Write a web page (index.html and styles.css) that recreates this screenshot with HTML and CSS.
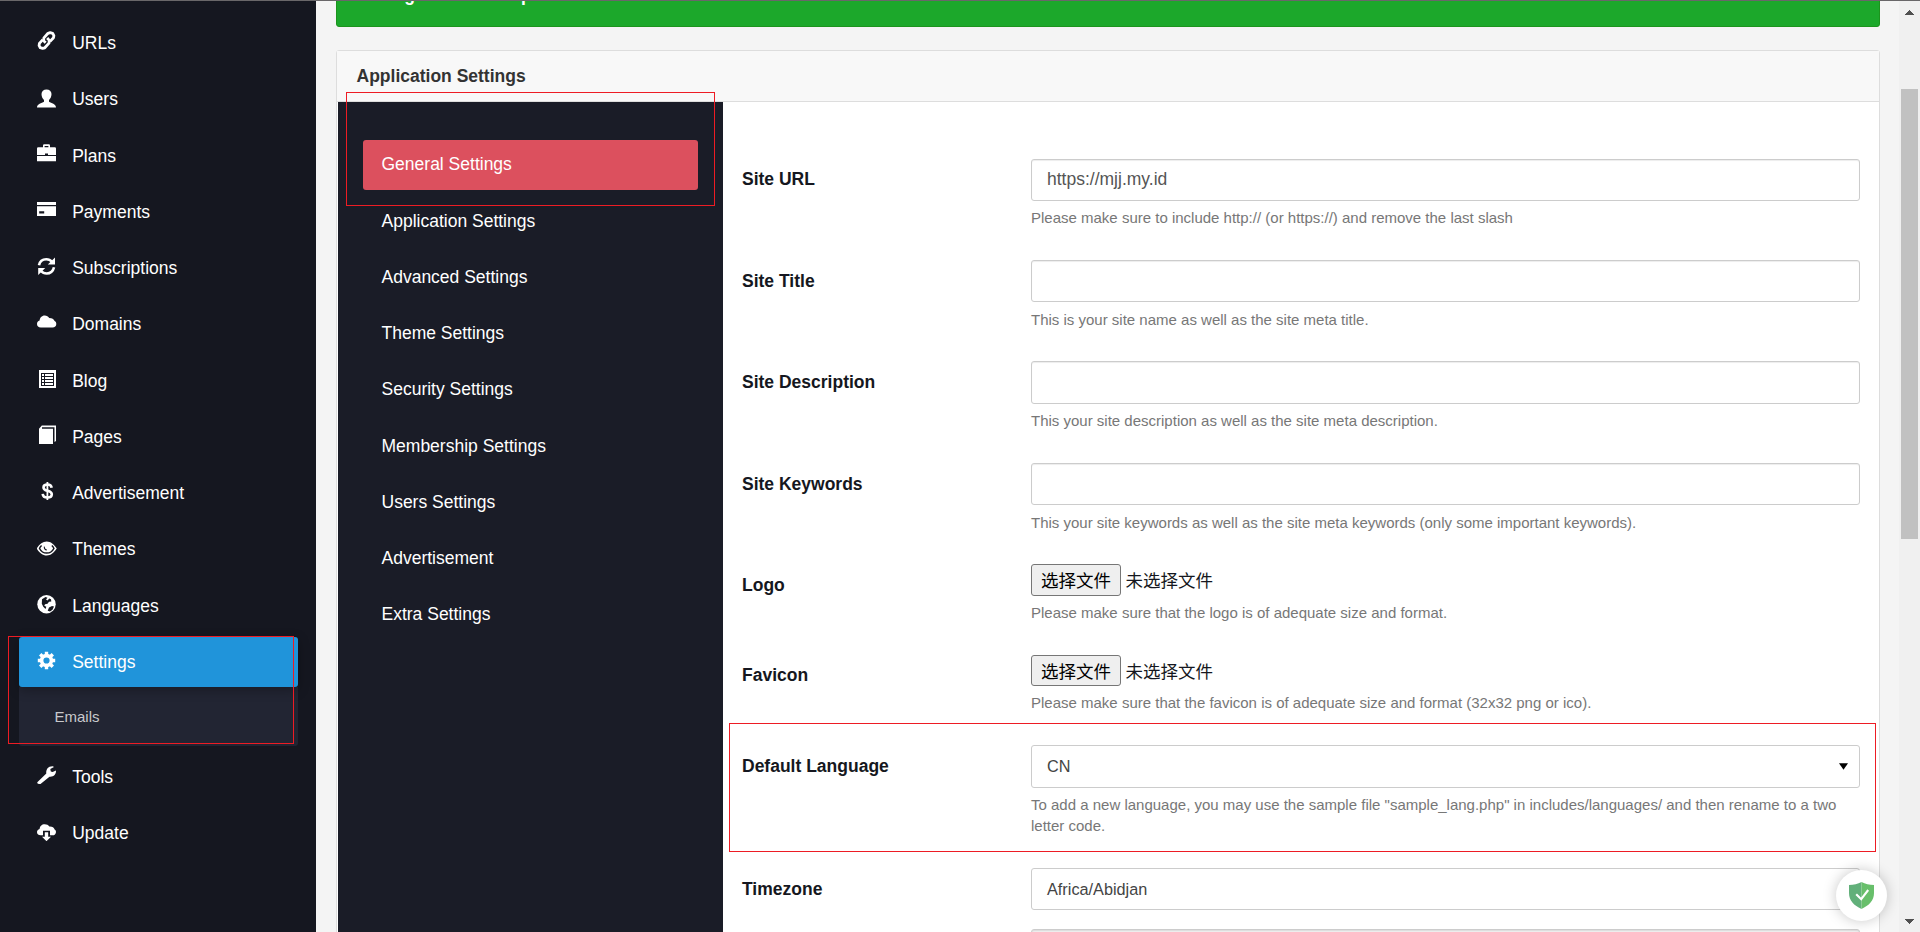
FILE: index.html
```
<!DOCTYPE html>
<html lang="en">
<head>
<meta charset="utf-8">
<title>Application Settings</title>
<link rel="stylesheet" href="styles.css">
</head>
<body>
<div class="app">
  <nav class="sidebar">
    <a class="nav-item"><svg class="icon" viewBox="0 0 20 20"><g fill="none" stroke="#fff" stroke-width="2.800" stroke-linejoin="round"><path d="M8.600 11.800 6.600 9.600 6.900 6.900 11 2.300 13.200 1.600 15.600 2.300 16.900 4.600 16.500 6.700 12.900 10.600"/><path d="M10.200 7 12.300 9.400 12 12.100 7.800 16.800 5.600 17.400 3.300 16.700 2.100 14.600 2.400 12.400 5.800 8.600"/></g></svg>URLs</a>
    <a class="nav-item"><svg class="icon" viewBox="0 0 20 20"><path fill="#fff" d="M9.500 1.500c3 0 5 1.800 5 4.600 0 2.600-1 4.700-2.500 5.900v1.700c2.300 1.500 7 2.200 7 5.800H0c0-3.600 4.700-4.300 7-5.800V12C5.500 10.800 4.500 8.700 4.500 6.100c0-2.800 2-4.600 5-4.600z"/></svg>Users</a>
    <a class="nav-item"><svg class="icon" viewBox="0 0 20 20"><path fill="#fff" fill-rule="evenodd" d="M6 3.200V1.500Q6 .3 7.200.3h4.600q1.200 0 1.200 1.200v1.700h4.800q1.200 0 1.200 1.200V11H0V4.400q0-1.200 1.200-1.200zM7.600 3.200h3.800V1.900H7.600zM8 9.600V11h3V9.600zM0 12h19v5.300H0z"/></svg>Plans</a>
    <a class="nav-item"><svg class="icon" viewBox="0 0 20 20"><path fill="#fff" fill-rule="evenodd" d="M0 2h19v3H0zM0 6.200h19V16H0zM2.200 11.200v2.200h5v-2.200z"/></svg>Payments</a>
    <a class="nav-item"><svg class="icon" viewBox="0 0 20 20"><g fill="none" stroke="#fff" stroke-width="2.600"><path d="M2 9.200C2.800 5.200 6 3.200 9.300 3.200c2.300 0 4.300.9 5.600 2.500"/><path d="M17 11.300c-.8 4-4 6.200-7.300 6.200-2.300 0-4.300-.9-5.600-2.500"/></g><path fill="#fff" d="M18 1.500v7h-7.200zM1.200 19v-7h7z"/></svg>Subscriptions</a>
    <a class="nav-item"><svg class="icon" viewBox="0 0 20 20"><path fill="#fff" d="M3.800 14.500C1.500 14.500 0 13 0 11c0-1.700 1-3 2.600-3.400C2.700 4.700 4.800 2.400 7.700 2.400c2 0 3.700 1 4.500 2.600 3 .0 4.500 1 5.400 3 1.100.4 1.700 1.500 1.700 2.900 0 2.100-1.500 3.600-3.700 3.600z"/></svg>Domains</a>
    <a class="nav-item"><svg class="icon" viewBox="0 0 20 20"><path fill="#fff" fill-rule="evenodd" d="M2 1h17v18H2zM4 4v13h13V4z"/><path fill="#fff" d="M5 5h2v2H5zM8 5h8v2H8zM5 8h2v2H5zM8 8h8v2H8zM5 11h2v2H5zM8 11h8v2H8zM5 14h2v2H5zM8 14h8v2H8z"/></svg>Blog</a>
    <a class="nav-item"><svg class="icon" viewBox="0 0 20 20"><path fill="#fff" d="M2 3.700h14V19H2zM2 3.700l2.800-3.200H19V16l-1.500 1V2.200H5V3.700z"/></svg>Pages</a>
    <a class="nav-item"><svg class="icon" viewBox="0 0 20 20"><path fill="none" stroke="#fff" stroke-width="2.600" d="M14.700 6.700C14.300 4.300 12.700 3.500 10.500 3.500c-2.300 0-4 .9-4 2.900 0 4.600 8.300 2.300 8.300 6.900 0 2.300-1.900 3.200-4.300 3.200-2.600 0-4.600-1.100-4.800-3.700"/><path stroke="#fff" stroke-width="1.800" d="M10.400 1v18"/></svg>Advertisement</a>
    <a class="nav-item"><svg class="icon" viewBox="0 0 20 20"><path fill="#fff" d="M-.3 10.500C2.300 6.300 5.700 3.500 9.700 3.500s7.400 2.800 10 7c-2.600 4.200-6 7-10 7s-7.400-2.800-10-7z"/><g fill="none" stroke="#15171f" stroke-width="1.500"><path d="M4.600 7.500C3.500 8.500 2.900 9.400 2.500 10.500c1.500 2.900 4.300 4.600 7.200 4.600s5.700-1.700 7.200-4.600c-.4-1.100-1-2-2.100-3"/><path stroke-width="1.100" d="M7.400 8.600c-.4 1.900.6 3.200 2.400 3.400"/></g></svg>Themes</a>
    <a class="nav-item"><svg class="icon" viewBox="0 0 20 20"><circle cx="9.500" cy="10.300" r="9.200" fill="#fff"/><path fill="#15171f" d="M5 5.200 8.500 3l2 .8L9 5.500l1.500 1 1.800-2 1.700.8.300 2.300-2.300.2-1.500 2L8 10.300l-.7 1.500 2 1-.8 2.200-2.200-2.200-1.500-3zM12 13.500l3-1.500 2 .5-1.500 3.200-2.500 1.700-2.300-.6z"/></svg>Languages</a>
    <div class="nav-group">
      <a class="nav-item nav-item-active"><svg class="icon" viewBox="0 0 20 20"><circle cx="9.500" cy="10.500" r="4.900" fill="none" stroke="#fff" stroke-width="3.600"/><path stroke="#fff" stroke-width="3.400" d="M9.500 1.800v3M9.500 16.200v3M.8 10.500h3M15.200 10.500h3M3.200 4.200l2.300 2.300M13.500 14.500l2.300 2.300M15.800 4.200l-2.300 2.300M5.500 14.500l-2.300 2.300"/></svg>Settings</a>
      <div class="submenu">Emails</div>
      <div class="mark mark-nav"></div>
    </div>
    <a class="nav-item"><svg class="icon" viewBox="0 0 20 20"><path fill="#fff" d="M.3 17.300 9.300 8.500C8.800 4.200 11.300 1 15.800 1.200L17 1.900 13.300 4l.5 2.500 1.800.6L19 5.500c.2 3.900-2.400 6.600-6.500 6.200L3.500 19H1.800L.3 18.200z"/></svg>Tools</a>
    <a class="nav-item"><svg class="icon" viewBox="0 0 20 20"><path fill="#fff" d="M3.700 14.300C1.500 14.300 0 13 0 11.300c0-1.600 1-2.800 2.600-3.200C2.700 5.300 4.800 3.200 7.700 3.200c2 0 3.700.8 4.600 2.300 2.900-.2 4.700 1 5.300 3 1 .4 1.400 1.400 1.400 2.400 0 2-1.500 3.400-3.600 3.400H13V9.800H6v4.500z"/><path fill="#fff" d="M7.800 11.300h3.400v4.500H14L9.500 20.200 5 15.800h2.800z"/></svg>Update</a>
  </nav>

  <main class="content">
    <div class="alert">Settings has been updated.</div>
    <section class="panel">
      <header class="panel-head">Application Settings</header>
      <div class="panel-body">
        <div class="tabs">
          <a class="tab tab-active">General Settings</a>
          <a class="tab">Application Settings</a>
          <a class="tab">Advanced Settings</a>
          <a class="tab">Theme Settings</a>
          <a class="tab">Security Settings</a>
          <a class="tab">Membership Settings</a>
          <a class="tab">Users Settings</a>
          <a class="tab">Advertisement</a>
          <a class="tab">Extra Settings</a>
          <div class="mark mark-tab"></div>
        </div>
        <form class="form">
          <div class="row row-url"><label class="label">Site URL</label><div class="field"><div class="control">https://mjj.my.id</div><p class="help">Please make sure to include http:// (or https://) and remove the last slash</p></div></div>
          <div class="row"><label class="label">Site Title</label><div class="field"><div class="control"></div><p class="help">This is your site name as well as the site meta title.</p></div></div>
          <div class="row row-description"><label class="label">Site Description</label><div class="field"><div class="control"></div><p class="help">This your site description as well as the site meta description.</p></div></div>
          <div class="row"><label class="label">Site Keywords</label><div class="field"><div class="control"></div><p class="help">This your site keywords as well as the site meta keywords (only some important keywords).</p></div></div>
          <div class="row row-file"><label class="label">Logo</label><div class="field"><div class="file"><span class="file-button">选择文件</span><span class="file-name">未选择文件</span></div><p class="help">Please make sure that the logo is of adequate size and format.</p></div></div>
          <div class="row row-file row-favicon"><label class="label">Favicon</label><div class="field"><div class="file"><span class="file-button">选择文件</span><span class="file-name">未选择文件</span></div><p class="help">Please make sure that the favicon is of adequate size and format (32x32 png or ico).</p></div></div>
          <div class="row row-language"><label class="label">Default Language</label><div class="field"><div class="control control-select">CN<svg class="caret" viewBox="0 0 10 7"><path d="M0 0h10L5 7z"/></svg></div><p class="help">To add a new language, you may use the sample file "sample_lang.php" in includes/languages/ and then rename to a two letter code.</p></div><div class="mark mark-row"></div></div>
          <div class="row row-short"><label class="label">Timezone</label><div class="field"><div class="control control-select">Africa/Abidjan</div></div></div>
          <div class="row"><label class="label"></label><div class="field"><div class="control control-disabled"></div></div></div>
        </form>
      </div>
    </section>
  </main>

  <div class="scrollbar">
    <svg class="arrow" viewBox="0 0 9 5"><path d="M4 0h1v1h1v1h1v1h1v1h1v1H0V4h1V3h1V2h1V1h1z"/></svg>
    <div class="thumb"></div>
    <svg class="arrow" viewBox="0 0 9 5"><path d="M0 0h9v1H8v1H7v1H6v1H5v1H4V4H3V3H2V2H1V1H0z"/></svg>
  </div>

  <div class="badge"><svg class="shield" viewBox="0 0 25 27"><path fill="#62b07a" d="M12.500 0v27C5 23.500 0 18.500 0 11V3q7 0 12.500-3z"/><path fill="#68bf6b" d="M12.500 0v27C20 23.500 25 18.500 25 11V3q-7 0-12.500-3z"/><path fill="none" stroke="#fff" stroke-width="2.100" d="m7.200 12.200 5 5L19.200 8"/></svg></div>
  <div class="topline"></div>
</div>
</body>
</html>
```

FILE: styles.css
```
* { box-sizing: border-box; }

body {
  margin: 0;
  background: #f4f4f4;
  color: #151720;
  font: 17.5px/25px "Liberation Sans", "Noto Sans CJK SC", sans-serif;
}

.app {
  position: relative;
  display: flex;
  width: 1920px;
  height: 932px;
  overflow: hidden;
}

/* Sidebar */
.sidebar {
  display: flex;
  flex: none;
  flex-direction: column;
  gap: 6.25px;
  width: 316px;
  padding: 18.25px 18px 0 19px;
  background: #151720;
  color: #fff;
}

.nav-item {
  display: flex;
  align-items: center;
  gap: 15.2px;
  flex: none;
  height: 50px;
  padding: 0.6px 18px 0;
  border-radius: 3px;
}

.icon {
  flex: none;
  width: 20px;
  height: 20px;
  margin-bottom: 4.6px;
}

.nav-group { position: relative; }

.nav-item-active {
  position: relative;
  background: #2094da;
  box-shadow: 0 3px 12px rgba(0, 0, 0, 0.3);
}

.submenu {
  height: 58.75px;
  padding: 17px 35.5px;
  border-radius: 0 0 3px 3px;
  background: #222533;
  color: #c8c9cc;
  font-size: 15px;
}

/* Annotation frames */
.mark {
  position: absolute;
  border: 1px solid #ed1c24;
}

.mark-nav { top: -1px; right: 4px; bottom: 2px; left: -11px; }
.mark-tab { top: -10px; left: 8px; width: 369px; height: 114px; }
.mark-row { top: -22px; right: -16px; left: -12px; height: 129px; }

/* Content */
.content {
  flex: none;
  width: 1583px;
  padding: 0 19px 0 20px;
}

.alert {
  height: 74px;
  margin: -47px 0 23px;
  padding: 29px 18.75px 0;
  border: 1px solid #1c941d;
  border-radius: 3px;
  background: #1ca82b;
  color: #fff;
  font-weight: bold;
}

.panel {
  height: 1000px;
  border: 1px solid #ddd;
  border-radius: 3px;
  background: #fff;
}

.panel-head {
  height: 51px;
  padding: 13px 19.5px 0;
  border-bottom: 1px solid #ddd;
  background: #f8f8f8;
  color: #333;
  font-weight: bold;
}

.panel-body {
  display: flex;
  height: 948px;
  padding-left: 1px;
}

.tabs {
  position: relative;
  display: flex;
  flex: none;
  flex-direction: column;
  gap: 6.25px;
  width: 385px;
  padding: 38px 25px;
  background: #1a1c27;
  color: #fff;
}

.tab {
  flex: none;
  height: 50px;
  padding: 12.3px 18.5px 0;
  border-radius: 3px;
}

.tab-active { background: #dc505e; }

/* Form */
.form {
  flex: 1;
  padding: 57px 19px 0 18px;
}

.row {
  position: relative;
  display: flex;
  height: 101px;
}

.label {
  flex: none;
  width: 290px;
  padding: 9px 0 0 1px;
  font-weight: bold;
}

.field {
  flex: 1;
  min-width: 0;
}

.control {
  height: 42px;
  padding: 7px 15px;
  border: 1px solid #ccc;
  border-radius: 3px;
  background: #fff;
  box-shadow: inset 0 1px 1px rgba(0, 0, 0, 0.075);
  color: #555;
}

.control-select {
  display: flex;
  align-items: center;
  justify-content: space-between;
  height: 43px;
  padding: 0 11.5px 0 15px;
  box-shadow: none;
  color: #444;
  font-size: 16.25px;
}

.control-disabled { background: #eee; }

.caret {
  width: 9px;
  height: 7px;
}

.help {
  margin: 7px 0 0;
  color: #777;
  font-size: 15px;
  line-height: 21px;
}

.file {
  display: flex;
  align-items: center;
  gap: 4.5px;
  height: 32px;
  font-family: "Noto Sans CJK SC", sans-serif;
}

.file-button {
  width: 90px;
  height: 100%;
  border: 1px solid #767676;
  border-radius: 3px;
  background: #efefef;
  color: #000;
  line-height: 29px;
  text-align: center;
}

.file-name { padding-bottom: 1px; }

.row-url .label { padding-top: 8px; }
.row-url .help { margin-top: 6px; }

.row-description { height: 102px; }
.row-description .control { height: 43px; }
.row-description .help { margin-top: 6px; }

.row-file { height: 91px; }
.row-file .help { margin-top: 6px; }

.row-favicon { height: 90px; }
.row-favicon .label { padding-top: 8px; }
.row-favicon .file { height: 31px; }

.row-language { height: 123px; }
.row-language .help { margin-top: 6px; }

.row-short { height: 61px; }
.row-short .control-select {
  height: 42px;
  padding-top: 1px;
}

/* Window chrome */
.scrollbar {
  display: flex;
  flex: none;
  flex-direction: column;
  align-items: center;
  width: 21px;
  padding: 10px 1px 8px 0;
  background: #f0f0f0;
}

.arrow {
  width: 9px;
  height: 5px;
  fill: #505050;
}

.thumb {
  width: 17px;
  height: 450px;
  margin: 74px 0 auto 1px;
  background: #c1c1c1;
}

.topline {
  position: absolute;
  top: 0;
  right: 0;
  left: 0;
  height: 1px;
  background: #696769;
}

.badge {
  position: absolute;
  top: 870px;
  left: 1836px;
  display: flex;
  align-items: center;
  justify-content: center;
  width: 51px;
  height: 51px;
  border-radius: 50%;
  background: #fff;
  box-shadow: 0 0 14px rgba(0, 0, 0, 0.22);
}

.shield {
  width: 25px;
  height: 27px;
}
```
